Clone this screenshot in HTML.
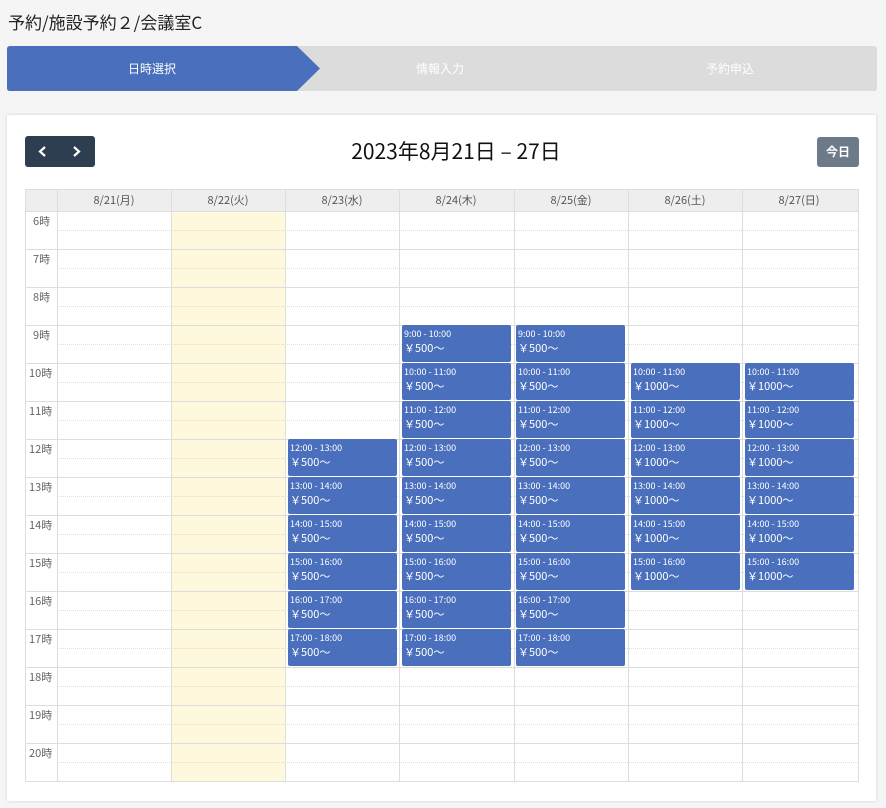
<!DOCTYPE html>
<html><head><meta charset="utf-8"><style>
*{margin:0;padding:0;box-sizing:border-box}
body{width:886px;height:808px;background:#f5f5f5;font-family:"Noto Sans CJK JP","Liberation Sans",sans-serif;position:relative;overflow:hidden;color:#222;line-height:1.2}
.a{position:absolute}
.ev{position:absolute;background:#4a6fbd;color:#fff;border-radius:2px;width:109px;height:37px;padding:3px 0 0 2px}
.ev b{display:block;font-weight:normal;font-size:9px;line-height:12px}
.ev i{display:block;font-style:normal;font-size:11px;line-height:16px}
.hl{position:absolute;left:25px;width:833px;height:0;border-top:1px solid #ddd}
.dl{position:absolute;left:57px;width:801px;height:0;border-top:1px dotted #ddd}
.vl{position:absolute;top:189px;height:592px;width:0;border-left:1px solid #ddd}
.tl{position:absolute;left:33px;font-size:11px;color:#666;line-height:14px}
.hd{position:absolute;top:192px;font-size:11px;color:#555;width:114px;text-align:center;line-height:16px}
</style></head><body>
<div class="a" style="left:8px;top:10px;font-size:17px;line-height:24px">予約/施設予約２/会議室C</div>
<div class="a" style="left:7px;top:46px;width:870px;height:45px;background:#dcdcdc;border-radius:3px"></div>
<svg class="a" style="left:7px;top:46px" width="315" height="45"><path d="M3 0H290L313 22.5L290 45H3Q0 45 0 42V3Q0 0 3 0Z" fill="#4a6fbd"/></svg>
<div class="a" style="left:7px;top:60px;width:290px;text-align:center;color:#fff;font-size:12px;line-height:18px">日時選択</div>
<div class="a" style="left:340px;top:60px;width:200px;text-align:center;color:#fff;font-size:12px;line-height:18px">情報入力</div>
<div class="a" style="left:630px;top:60px;width:200px;text-align:center;color:#fff;font-size:12px;line-height:18px">予約申込</div>
<div class="a" style="left:7px;top:115px;width:869px;height:686px;background:#fff;box-shadow:0 0 3px rgba(0,0,0,.15)"></div>
<div class="a" style="left:25px;top:136px;width:70px;height:31px;background:#2c3e50;border-radius:3px"></div>
<svg class="a" style="left:25px;top:136px" width="70" height="31"><path d="M20 11l-5 4.5 5 4.5M49 11l5 4.5-5 4.5" stroke="#fff" stroke-width="2.2" fill="none"/></svg>
<div class="a" style="left:206px;top:137px;width:500px;text-align:center;font-size:21px;line-height:29px;color:#111">2023年8月21日 – 27日</div>
<div class="a" style="left:817px;top:137px;width:42px;height:30px;background:#6c7a89;border-radius:3px;color:#fff;font-size:12px;font-weight:bold;text-align:center;line-height:30px">今日</div>
<div class="a" style="left:25px;top:189px;width:833px;height:22px;background:#eee"></div>
<div class="a" style="left:171px;top:211px;width:114px;height:570px;background:#fef8dd"></div>
<div class="a" style="left:25px;top:189px;width:834px;height:593px;border:1px solid #ddd"></div>
<div class="hd" style="left:57px">8/21(月)</div><div class="hd" style="left:171px">8/22(火)</div><div class="hd" style="left:285px">8/23(水)</div><div class="hd" style="left:399px">8/24(木)</div><div class="hd" style="left:514px">8/25(金)</div><div class="hd" style="left:628px">8/26(土)</div><div class="hd" style="left:742px">8/27(日)</div>
<div class="vl" style="left:57px"></div><div class="vl" style="left:171px"></div><div class="vl" style="left:285px"></div><div class="vl" style="left:399px"></div><div class="vl" style="left:514px"></div><div class="vl" style="left:628px"></div><div class="vl" style="left:742px"></div>
<div class="hl" style="top:211px"></div><div class="dl" style="top:230px"></div><div class="hl" style="top:249px"></div><div class="dl" style="top:268px"></div><div class="hl" style="top:287px"></div><div class="dl" style="top:306px"></div><div class="hl" style="top:325px"></div><div class="dl" style="top:344px"></div><div class="hl" style="top:363px"></div><div class="dl" style="top:382px"></div><div class="hl" style="top:401px"></div><div class="dl" style="top:420px"></div><div class="hl" style="top:439px"></div><div class="dl" style="top:458px"></div><div class="hl" style="top:477px"></div><div class="dl" style="top:496px"></div><div class="hl" style="top:515px"></div><div class="dl" style="top:534px"></div><div class="hl" style="top:553px"></div><div class="dl" style="top:572px"></div><div class="hl" style="top:591px"></div><div class="dl" style="top:610px"></div><div class="hl" style="top:629px"></div><div class="dl" style="top:648px"></div><div class="hl" style="top:667px"></div><div class="dl" style="top:686px"></div><div class="hl" style="top:705px"></div><div class="dl" style="top:724px"></div><div class="hl" style="top:743px"></div><div class="dl" style="top:762px"></div>
<div class="tl" style="top:214px">6時</div><div class="tl" style="top:252px">7時</div><div class="tl" style="top:290px">8時</div><div class="tl" style="top:328px">9時</div><div class="tl" style="top:366px;left:29px">10時</div><div class="tl" style="top:404px;left:29px">11時</div><div class="tl" style="top:442px;left:29px">12時</div><div class="tl" style="top:480px;left:29px">13時</div><div class="tl" style="top:518px;left:29px">14時</div><div class="tl" style="top:556px;left:29px">15時</div><div class="tl" style="top:594px;left:29px">16時</div><div class="tl" style="top:632px;left:29px">17時</div><div class="tl" style="top:670px;left:29px">18時</div><div class="tl" style="top:708px;left:29px">19時</div><div class="tl" style="top:746px;left:29px">20時</div>

<div class="ev" style="left:288px;top:439px"><b>12:00 - 13:00</b><i>￥500～</i></div>
<div class="ev" style="left:288px;top:477px"><b>13:00 - 14:00</b><i>￥500～</i></div>
<div class="ev" style="left:288px;top:515px"><b>14:00 - 15:00</b><i>￥500～</i></div>
<div class="ev" style="left:288px;top:553px"><b>15:00 - 16:00</b><i>￥500～</i></div>
<div class="ev" style="left:288px;top:591px"><b>16:00 - 17:00</b><i>￥500～</i></div>
<div class="ev" style="left:288px;top:629px"><b>17:00 - 18:00</b><i>￥500～</i></div>

<div class="ev" style="left:402px;top:325px"><b>9:00 - 10:00</b><i>￥500～</i></div>
<div class="ev" style="left:402px;top:363px"><b>10:00 - 11:00</b><i>￥500～</i></div>
<div class="ev" style="left:402px;top:401px"><b>11:00 - 12:00</b><i>￥500～</i></div>
<div class="ev" style="left:402px;top:439px"><b>12:00 - 13:00</b><i>￥500～</i></div>
<div class="ev" style="left:402px;top:477px"><b>13:00 - 14:00</b><i>￥500～</i></div>
<div class="ev" style="left:402px;top:515px"><b>14:00 - 15:00</b><i>￥500～</i></div>
<div class="ev" style="left:402px;top:553px"><b>15:00 - 16:00</b><i>￥500～</i></div>
<div class="ev" style="left:402px;top:591px"><b>16:00 - 17:00</b><i>￥500～</i></div>
<div class="ev" style="left:402px;top:629px"><b>17:00 - 18:00</b><i>￥500～</i></div>

<div class="ev" style="left:516px;top:325px"><b>9:00 - 10:00</b><i>￥500～</i></div>
<div class="ev" style="left:516px;top:363px"><b>10:00 - 11:00</b><i>￥500～</i></div>
<div class="ev" style="left:516px;top:401px"><b>11:00 - 12:00</b><i>￥500～</i></div>
<div class="ev" style="left:516px;top:439px"><b>12:00 - 13:00</b><i>￥500～</i></div>
<div class="ev" style="left:516px;top:477px"><b>13:00 - 14:00</b><i>￥500～</i></div>
<div class="ev" style="left:516px;top:515px"><b>14:00 - 15:00</b><i>￥500～</i></div>
<div class="ev" style="left:516px;top:553px"><b>15:00 - 16:00</b><i>￥500～</i></div>
<div class="ev" style="left:516px;top:591px"><b>16:00 - 17:00</b><i>￥500～</i></div>
<div class="ev" style="left:516px;top:629px"><b>17:00 - 18:00</b><i>￥500～</i></div>

<div class="ev" style="left:631px;top:363px"><b>10:00 - 11:00</b><i>￥1000～</i></div>
<div class="ev" style="left:631px;top:401px"><b>11:00 - 12:00</b><i>￥1000～</i></div>
<div class="ev" style="left:631px;top:439px"><b>12:00 - 13:00</b><i>￥1000～</i></div>
<div class="ev" style="left:631px;top:477px"><b>13:00 - 14:00</b><i>￥1000～</i></div>
<div class="ev" style="left:631px;top:515px"><b>14:00 - 15:00</b><i>￥1000～</i></div>
<div class="ev" style="left:631px;top:553px"><b>15:00 - 16:00</b><i>￥1000～</i></div>

<div class="ev" style="left:745px;top:363px"><b>10:00 - 11:00</b><i>￥1000～</i></div>
<div class="ev" style="left:745px;top:401px"><b>11:00 - 12:00</b><i>￥1000～</i></div>
<div class="ev" style="left:745px;top:439px"><b>12:00 - 13:00</b><i>￥1000～</i></div>
<div class="ev" style="left:745px;top:477px"><b>13:00 - 14:00</b><i>￥1000～</i></div>
<div class="ev" style="left:745px;top:515px"><b>14:00 - 15:00</b><i>￥1000～</i></div>
<div class="ev" style="left:745px;top:553px"><b>15:00 - 16:00</b><i>￥1000～</i></div>
</body></html>
